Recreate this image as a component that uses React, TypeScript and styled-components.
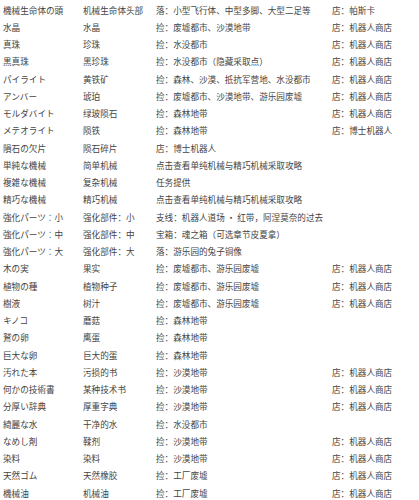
import React from 'react';
import styled, { createGlobalStyle } from 'styled-components';

const GlobalStyle = createGlobalStyle`
  html, body {
    margin: 0;
    padding: 0;
    background: #ffffff;
  }
`;

type Item = {
  jp: string;
  cn: string;
  source: string;
  shop?: string;
};

const items: Item[] = [
  { jp: '機械生命体の頭', cn: '机械生命体头部', source: '落：小型飞行体、中型多脚、大型二足等', shop: '店：帕斯卡' },
  { jp: '水晶', cn: '水晶', source: '捡：废墟都市、沙漠地带', shop: '店：机器人商店' },
  { jp: '真珠', cn: '珍珠', source: '捡：水没都市', shop: '店：机器人商店' },
  { jp: '黒真珠', cn: '黑珍珠', source: '捡：水没都市（隐藏采取点）', shop: '店：机器人商店' },
  { jp: 'パイライト', cn: '黄铁矿', source: '捡：森林、沙漠、抵抗军营地、水没都市', shop: '店：机器人商店' },
  { jp: 'アンバー', cn: '琥珀', source: '捡：废墟都市、沙漠地带、游乐园废墟', shop: '店：机器人商店' },
  { jp: 'モルダバイト', cn: '绿玻陨石', source: '捡：森林地带', shop: '店：机器人商店' },
  { jp: 'メテオライト', cn: '陨铁', source: '捡：森林地带', shop: '店：博士机器人' },
  { jp: '隕石の欠片', cn: '陨石碎片', source: '店：博士机器人' },
  { jp: '単純な機械', cn: '简单机械', source: '点击查看单纯机械与精巧机械采取攻略' },
  { jp: '複雑な機械', cn: '复杂机械', source: '任务提供' },
  { jp: '精巧な機械', cn: '精巧机械', source: '点击查看单纯机械与精巧机械采取攻略' },
  { jp: '強化パーツ：小', cn: '强化部件：小', source: '支线：机器人道场 · 红带，阿涅莫奈的过去' },
  { jp: '強化パーツ：中', cn: '强化部件：中', source: '宝箱：魂之箱（可选章节皮夏拿）' },
  { jp: '強化パーツ：大', cn: '强化部件：大', source: '落：游乐园的兔子铜像' },
  { jp: '木の実', cn: '果实', source: '捡：废墟都市、游乐园废墟', shop: '店：机器人商店' },
  { jp: '植物の種', cn: '植物种子', source: '捡：废墟都市、游乐园废墟', shop: '店：机器人商店' },
  { jp: '樹液', cn: '树汁', source: '捡：废墟都市、游乐园废墟', shop: '店：机器人商店' },
  { jp: 'キノコ', cn: '蘑菇', source: '捡：森林地带' },
  { jp: '鷲の卵', cn: '鹰蛋', source: '捡：森林地带' },
  { jp: '巨大な卵', cn: '巨大的蛋', source: '捡：森林地带' },
  { jp: '汚れた本', cn: '污损的书', source: '捡：沙漠地带', shop: '店：机器人商店' },
  { jp: '何かの技術書', cn: '某种技术书', source: '捡：沙漠地带', shop: '店：机器人商店' },
  { jp: '分厚い辞典', cn: '厚重字典', source: '捡：沙漠地带', shop: '店：机器人商店' },
  { jp: '綺麗な水', cn: '干净的水', source: '捡：水没都市' },
  { jp: 'なめし剤', cn: '鞣剂', source: '捡：沙漠地带', shop: '店：机器人商店' },
  { jp: '染料', cn: '染料', source: '捡：沙漠地带', shop: '店：机器人商店' },
  { jp: '天然ゴム', cn: '天然橡胶', source: '捡：工厂废墟', shop: '店：机器人商店' },
  { jp: '機械油', cn: '机械油', source: '捡：工厂废墟', shop: '店：机器人商店' },
];

const Table = styled.div`
  display: flex;
  flex-direction: column;
  padding: 1px 0 0 3px;
  color: #444444;
  font-size: 8.6px;
  font-family: 'Noto Sans CJK SC', 'Noto Sans CJK JP', sans-serif;
`;

const Row = styled.div`
  display: grid;
  grid-template-columns: 80px 73px 176px auto;
  height: 17.25px;
  align-items: center;
  white-space: nowrap;
`;

const Cell = styled.div<{ $jp?: boolean }>`
  overflow: visible;
  font-family: ${(p) =>
    p.$jp
      ? "'Noto Sans CJK JP', 'Noto Sans CJK SC', sans-serif"
      : "'Noto Sans CJK SC', sans-serif"};
`;

const App = () => (
  <>
    <GlobalStyle />
    <Table>
      {items.map((it) => (
        <Row key={it.jp}>
          <Cell $jp lang="ja">{it.jp}</Cell>
          <Cell lang="zh-CN">{it.cn}</Cell>
          <Cell lang="zh-CN">{it.source}</Cell>
          <Cell lang="zh-CN">{it.shop ?? ''}</Cell>
        </Row>
      ))}
    </Table>
  </>
);

export default App;
